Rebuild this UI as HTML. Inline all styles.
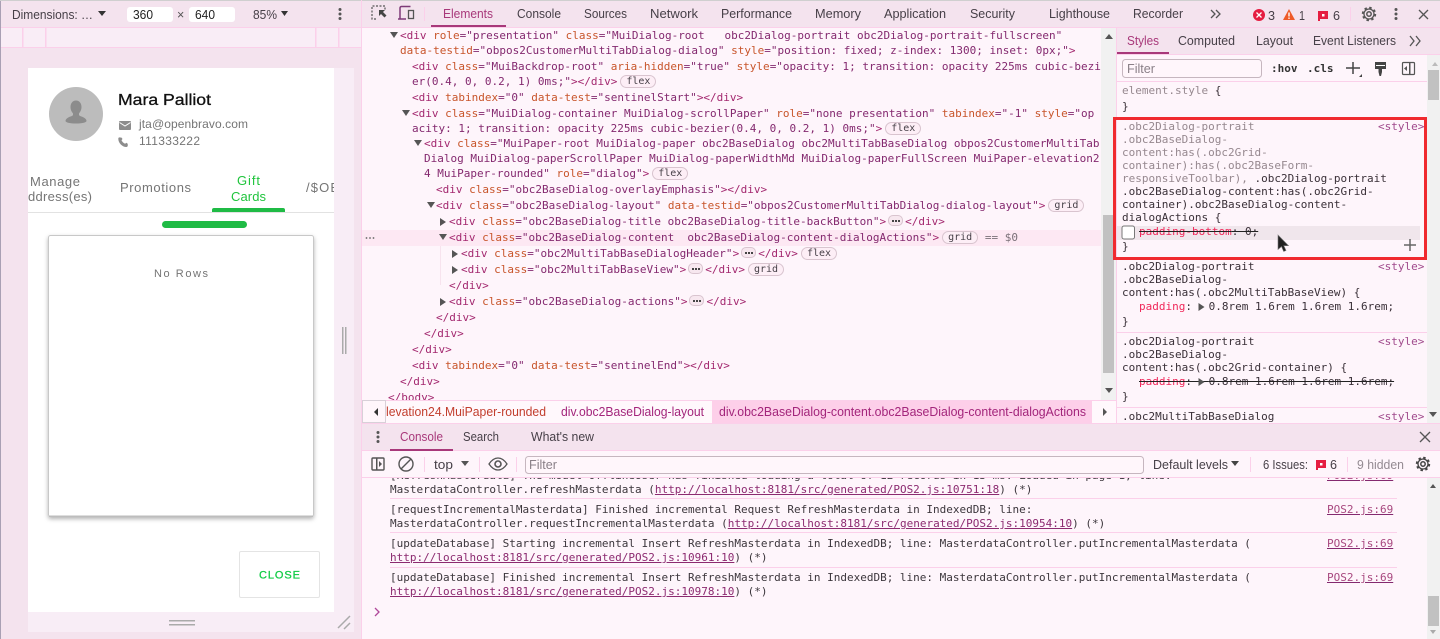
<!DOCTYPE html>
<html><head><meta charset="utf-8"><title>DevTools</title>
<style>
html,body{margin:0;padding:0;width:1440px;height:639px;overflow:hidden;background:#fef5fb}
svg{position:absolute;left:0;top:0}
.ov{z-index:3}
text{font-family:"Liberation Sans",sans-serif;font-size:12.5px;fill:#474048}
.r{font-family:"Liberation Sans",sans-serif;fill:#757575;font-size:13px}
.m{font-family:"DejaVu Sans Mono",monospace;font-size:11px}
.clip{position:absolute;overflow:hidden;z-index:2}
.l{position:absolute;font:11px/16px "DejaVu Sans Mono",monospace;white-space:pre;color:#a3286f}
.a{color:#c8552b}.v{color:#84296f}
.s{color:#333038}.g{color:#96888f}.p{color:#f0285a}.k{color:#3a3038}
.st{text-decoration:line-through;text-decoration-color:#222}
.c{color:#3c363c}.h{color:#8c2a70;text-decoration:underline}
.j{color:#a8487f;text-decoration:underline;text-decoration-color:#84296f}
.b{display:inline-block;height:11px;line-height:11px;border:1px solid #d9c4cf;background:#fdeef6;border-radius:7px;color:#474048;font-size:10px;padding:0 5px;vertical-align:1px;margin-left:3px}
.d{display:inline-block;width:13px;height:9px;border:1px solid #d9c4cf;background:#f7e7ef;border-radius:5px;vertical-align:-1px;position:relative;margin:0 2px}
.d:after{content:"";position:absolute;left:3px;top:4px;width:1.5px;height:1.5px;background:#444;box-shadow:3px 0 #444,6px 0 #444}
</style></head><body>

<svg width="1440" height="639" viewBox="0 0 1440 639">
<!-- base panels -->
<rect width="1440" height="639" fill="#fef5fb"/>
<rect width="362" height="639" fill="#f4e3ee"/>
<rect width="1" height="639" x="0" fill="#a9a0b4"/>
<rect y="0" width="1440" height="1" fill="#cfcfcf"/>
<rect x="1" y="28" width="360" height="19" fill="#f9edf6"/>
<rect x="1" y="27" width="360" height="1" fill="#fbd0ea"/>
<rect x="1" y="47" width="360" height="1" fill="#fbd0ea"/>
<rect x="22" y="28" width="1.5" height="19" fill="#fbd0ea"/><rect x="45" y="28" width="1.5" height="19" fill="#fbd0ea"/><rect x="315" y="28" width="1.5" height="19" fill="#fbd0ea"/><rect x="338" y="28" width="1.5" height="19" fill="#fbd0ea"/>
<rect x="334" y="68" width="20" height="564" fill="#f8edf6"/>
<rect x="28" y="612" width="326" height="20" fill="#f8edf6"/>
<rect x="28" y="68" width="306" height="544" fill="#fff"/>
<rect x="361" y="0" width="1" height="639" fill="#fbd0ea"/>
<!-- top tab bar -->
<rect x="362" y="1" width="1078" height="26" fill="#f4e3ee"/>
<rect x="362" y="27" width="1078" height="1" fill="#fbd0ea"/>
<rect x="424" y="7" width="1" height="14" fill="#fbd0ea"/>
<rect x="431" y="25" width="75" height="2" fill="#a8387a"/>
<!-- scrollbars -->
<rect x="1101" y="28" width="15" height="373" fill="#f1f1f1"/>
<rect x="1103" y="215" width="11" height="158" fill="#c1c1c1"/>
<rect x="1116" y="28" width="1" height="396" fill="#fbd0ea"/>
<rect x="1427" y="55" width="13" height="369" fill="#f1f1f1"/>
<rect x="1428" y="70" width="11" height="30" fill="#c1c1c1"/>
<!-- styles tabs -->
<rect x="1117" y="28" width="323" height="26" fill="#f4e3ee"/>
<rect x="1117" y="54" width="323" height="1" fill="#fbd0ea"/>
<rect x="1117" y="52" width="52" height="2" fill="#a8387a"/>
<rect x="1117" y="81" width="310" height="1" fill="#fbd0ea"/>
<rect x="1122.5" y="59.5" width="139" height="18" rx="3" fill="#fff6fb" stroke="#c6b6bf"/>
<rect x="1117" y="259" width="310" height="1" fill="#fbd0ea"/>
<rect x="1117" y="332" width="310" height="1" fill="#fbd0ea"/>
<rect x="1117" y="407" width="310" height="1" fill="#fbd0ea"/>
<rect x="1117" y="226" width="303" height="14" fill="#f0e6ec"/>
<!-- selected DOM row -->
<rect x="362" y="230" width="739" height="16" fill="#fde8f3"/>
<rect x="440" y="246" width="1" height="39" fill="#f7e3ee"/>
<!-- breadcrumbs -->
<rect x="362" y="400" width="754" height="1" fill="#fbd0ea"/>
<rect x="362" y="401" width="754" height="23" fill="#fff8fc"/>
<rect x="712" y="401" width="380" height="22" fill="#fdcfe9"/>
<rect x="362.5" y="400.5" width="23" height="22" fill="#fff6fb" stroke="#d8d0d8"/>
<rect x="362" y="423" width="1078" height="1" fill="#fbd0ea"/>
<!-- drawer -->
<rect x="362" y="424" width="1078" height="26" fill="#f4e3ee"/>
<rect x="362" y="450" width="1078" height="1" fill="#fbd0ea"/>
<rect x="390" y="449" width="63" height="2" fill="#a8387a"/>
<rect x="362" y="451" width="1078" height="26" fill="#fef5fb"/>
<rect x="362" y="477" width="1078" height="1" fill="#fbd0ea"/>
<rect x="424" y="457" width="1" height="15" fill="#fbd0ea"/><rect x="479" y="457" width="1" height="15" fill="#fbd0ea"/><rect x="516" y="457" width="1" height="15" fill="#fbd0ea"/><rect x="1250" y="457" width="1" height="15" fill="#fbd0ea"/><rect x="1347" y="457" width="1" height="15" fill="#fbd0ea"/>
<rect x="525.5" y="456.5" width="618" height="17" rx="3" fill="#fff6fb" stroke="#c6b6bf"/>
<rect x="1427" y="478" width="13" height="161" fill="#f1f1f1"/>
<rect x="1428" y="596" width="11" height="30" fill="#c1c1c1"/>
<rect x="390" y="498" width="1007" height="1" fill="#fbd0ea"/><rect x="390" y="532" width="1007" height="1" fill="#fbd0ea"/><rect x="390" y="567" width="1007" height="1" fill="#fbd0ea"/>
</svg>

<div class="clip" style="left:362px;top:29px;width:739px;height:371px">
<div class="l" style="left:38px;top:-1px">&lt;div <span class="a">role</span><span class="v">="presentation"</span> <span class="a">class</span><span class="v">="MuiDialog-root   obc2Dialog-portrait obc2Dialog-portrait-fullscreen"</span></div>
<div class="l" style="left:38px;top:14px"><span class="a">data-testid</span><span class="v">="obpos2CustomerMultiTabDialog-dialog"</span> <span class="a">style</span><span class="v">="position: fixed; z-index: 1300; inset: 0px;"</span>&gt;</div>
<div class="l" style="left:50px;top:30px">&lt;div <span class="a">class</span><span class="v">="MuiBackdrop-root"</span> <span class="a">aria-hidden</span><span class="v">="true"</span> <span class="a">style</span><span class="v">="opacity: 1; transition: opacity 225ms cubic-bezi</span></div>
<div class="l" style="left:50px;top:45px"><span class="v">er(0.4, 0, 0.2, 1) 0ms;"</span>&gt;&lt;/div&gt;<span class="b">flex</span></div>
<div class="l" style="left:50px;top:61px">&lt;div <span class="a">tabindex</span><span class="v">="0"</span> <span class="a">data-test</span><span class="v">="sentinelStart"</span>&gt;&lt;/div&gt;</div>
<div class="l" style="left:50px;top:77px">&lt;div <span class="a">class</span><span class="v">="MuiDialog-container MuiDialog-scrollPaper"</span> <span class="a">role</span><span class="v">="none presentation"</span> <span class="a">tabindex</span><span class="v">="-1"</span> <span class="a">style</span><span class="v">="op</span></div>
<div class="l" style="left:50px;top:92px"><span class="v">acity: 1; transition: opacity 225ms cubic-bezier(0.4, 0, 0.2, 1) 0ms;"</span>&gt;<span class="b">flex</span></div>
<div class="l" style="left:62px;top:107px">&lt;div <span class="a">class</span><span class="v">="MuiPaper-root MuiDialog-paper obc2BaseDialog obc2MultiTabBaseDialog obpos2CustomerMultiTab</span></div>
<div class="l" style="left:62px;top:122px"><span class="v">Dialog MuiDialog-paperScrollPaper MuiDialog-paperWidthMd MuiDialog-paperFullScreen MuiPaper-elevation2</span></div>
<div class="l" style="left:62px;top:137px"><span class="v">4 MuiPaper-rounded"</span> <span class="a">role</span><span class="v">="dialog"</span>&gt;<span class="b">flex</span></div>
<div class="l" style="left:74px;top:153px">&lt;div <span class="a">class</span><span class="v">="obc2BaseDialog-overlayEmphasis"</span>&gt;&lt;/div&gt;</div>
<div class="l" style="left:74px;top:169px">&lt;div <span class="a">class</span><span class="v">="obc2BaseDialog-layout"</span> <span class="a">data-testid</span><span class="v">="obpos2CustomerMultiTabDialog-dialog-layout"</span>&gt;<span class="b">grid</span></div>
<div class="l" style="left:87px;top:185px">&lt;div <span class="a">class</span><span class="v">="obc2BaseDialog-title obc2BaseDialog-title-backButton"</span>&gt;<span class="d"></span>&lt;/div&gt;</div>
<div class="l" style="left:87px;top:201px">&lt;div <span class="a">class</span><span class="v">="obc2BaseDialog-content  obc2BaseDialog-content-dialogActions"</span>&gt;<span class="b">grid</span> <span style="color:#7a7078">== $0</span></div>
<div class="l" style="left:99px;top:217px">&lt;div <span class="a">class</span><span class="v">="obc2MultiTabBaseDialogHeader"</span>&gt;<span class="d"></span>&lt;/div&gt;<span class="b">flex</span></div>
<div class="l" style="left:99px;top:233px">&lt;div <span class="a">class</span><span class="v">="obc2MultiTabBaseView"</span>&gt;<span class="d"></span>&lt;/div&gt;<span class="b">grid</span></div>
<div class="l" style="left:87px;top:249px">&lt;/div&gt;</div>
<div class="l" style="left:87px;top:265px">&lt;div <span class="a">class</span><span class="v">="obc2BaseDialog-actions"</span>&gt;<span class="d"></span>&lt;/div&gt;</div>
<div class="l" style="left:74px;top:281px">&lt;/div&gt;</div>
<div class="l" style="left:62px;top:297px">&lt;/div&gt;</div>
<div class="l" style="left:50px;top:313px">&lt;/div&gt;</div>
<div class="l" style="left:50px;top:329px">&lt;div <span class="a">tabindex</span><span class="v">="0"</span> <span class="a">data-test</span><span class="v">="sentinelEnd"</span>&gt;&lt;/div&gt;</div>
<div class="l" style="left:38px;top:345px">&lt;/div&gt;</div>
<div class="l" style="left:26px;top:361px">&lt;/body&gt;</div>
</div>

<div class="clip" style="left:1117px;top:82px;width:310px;height:342px">
<div class="l g" style="left:5px;top:1px">element.style <span class="k">{</span></div>
<div class="l k" style="left:5px;top:17px">}</div>
<div class="l g" style="left:5px;top:37px">.obc2Dialog-portrait</div>
<div class="l g" style="left:5px;top:50px">.obc2BaseDialog-</div>
<div class="l g" style="left:5px;top:63px">content:has(.obc2Grid-</div>
<div class="l g" style="left:5px;top:76px">container):has(.obc2BaseForm-</div>
<div class="l g" style="left:5px;top:89px">responsiveToolbar), <span class="k">.obc2Dialog-portrait</span></div>
<div class="l k" style="left:5px;top:102px">.obc2BaseDialog-content:has(.obc2Grid-</div>
<div class="l k" style="left:5px;top:115px">container).obc2BaseDialog-content-</div>
<div class="l k" style="left:5px;top:128px">dialogActions {</div>
<div class="l p st" style="left:22px;top:142px">padding-bottom<span class="k">: 0;</span></div>
<div class="l k" style="left:5px;top:157px">}</div>
<div class="l k" style="left:5px;top:177px">.obc2Dialog-portrait</div>
<div class="l k" style="left:5px;top:190px">.obc2BaseDialog-</div>
<div class="l k" style="left:5px;top:203px">content:has(.obc2MultiTabBaseView) {</div>
<div class="l p" style="left:22px;top:217px">padding<span class="k">: <span style="letter-spacing:3.4px"> </span>0.8rem 1.6rem 1.6rem 1.6rem;</span></div>
<div class="l k" style="left:5px;top:232px">}</div>
<div class="l k" style="left:5px;top:252px">.obc2Dialog-portrait</div>
<div class="l k" style="left:5px;top:265px">.obc2BaseDialog-</div>
<div class="l k" style="left:5px;top:278px">content:has(.obc2Grid-container) {</div>
<div class="l p st" style="left:22px;top:292px">padding<span class="k">: <span style="letter-spacing:3.4px"> </span>0.8rem 1.6rem 1.6rem 1.6rem;</span></div>
<div class="l k" style="left:5px;top:307px">}</div>
<div class="l k" style="left:5px;top:327px">.obc2MultiTabBaseDialog</div>
<div class="l" style="left:261px;top:37px;color:#a04a8c">&lt;style&gt;</div>
<div class="l" style="left:261px;top:177px;color:#a04a8c">&lt;style&gt;</div>
<div class="l" style="left:261px;top:252px;color:#a04a8c">&lt;style&gt;</div>
<div class="l" style="left:261px;top:327px;color:#a04a8c">&lt;style&gt;</div>
</div>

<div class="clip" style="left:362px;top:478px;width:1065px;height:161px">
<div class="l c" style="left:28px;top:-10px">[RefreshMasterdata] The model OfflineUser has finished loading a total of 12 records in 13 ms. Loaded in page 1, line:</div>
<div class="l c" style="left:28px;top:4px">MasterdataController.refreshMasterdata (<span class="h">http://localhost:8181/src/generated/POS2.js:10751:18</span>) (*)</div>
<div class="l c" style="left:28px;top:24px">[requestIncrementalMasterdata] Finished incremental Request RefreshMasterdata in IndexedDB; line:</div>
<div class="l c" style="left:28px;top:38px">MasterdataController.requestIncrementalMasterdata (<span class="h">http://localhost:8181/src/generated/POS2.js:10954:10</span>) (*)</div>
<div class="l c" style="left:28px;top:58px">[updateDatabase] Starting incremental Insert RefreshMasterdata in IndexedDB; line: MasterdataController.putIncrementalMasterdata (</div>
<div class="l c" style="left:28px;top:72px"><span class="h">http://localhost:8181/src/generated/POS2.js:10961:10</span>) (*)</div>
<div class="l c" style="left:28px;top:92px">[updateDatabase] Finished incremental Insert RefreshMasterdata in IndexedDB; line: MasterdataController.putIncrementalMasterdata (</div>
<div class="l c" style="left:28px;top:106px"><span class="h">http://localhost:8181/src/generated/POS2.js:10978:10</span>) (*)</div>
<div class="l j" style="left:965px;top:-10px">POS2.js:69</div>
<div class="l j" style="left:965px;top:24px">POS2.js:69</div>
<div class="l j" style="left:965px;top:58px">POS2.js:69</div>
<div class="l j" style="left:965px;top:92px">POS2.js:69</div>
</div>

<svg class="ov" width="1440" height="639" viewBox="0 0 1440 639">
<defs><filter id="sh" x="-5%" y="-5%" width="110%" height="110%"><feDropShadow dx="0" dy="2" stdDeviation="2" flood-color="#000" flood-opacity=".3"/></filter></defs>
<!-- device toolbar -->
<text x="12" y="19" textLength="81" lengthAdjust="spacingAndGlyphs">Dimensions: …</text>
<path d="M98 11h8l-4 5z" fill="#333"/>
<rect x="127" y="7" width="46" height="15" rx="3" fill="#fff"/><rect x="189" y="7" width="46" height="15" rx="3" fill="#fff"/>
<text x="133" y="19" textLength="20" lengthAdjust="spacingAndGlyphs" style="fill:#222">360</text>
<text x="177" y="19" style="fill:#555">×</text>
<text x="195" y="19" textLength="20" lengthAdjust="spacingAndGlyphs" style="fill:#222">640</text>
<text x="253" y="19" textLength="24" lengthAdjust="spacingAndGlyphs">85%</text>
<path d="M281 11h7l-3.500 5z" fill="#333"/>
<g fill="#555"><circle cx="340" cy="9.500" r="1.500"/><circle cx="340" cy="14" r="1.500"/><circle cx="340" cy="18.500" r="1.500"/></g>
<!-- device content -->
<circle cx="76" cy="114" r="27" fill="#bcbcbc"/>
<path d="M76 100.500c3.500 0 5.500 3 5.500 6.500 0 3-1.400 5-2.500 6.500v1.500c0 1 3.500 1.500 5.500 3 1.500 1 2 2 2 3 0 1.500-5 2.500-10.500 2.500s-10.500-1-10.500-2.500c0-1 .5-2 2-3 2-1.500 5.500-2 5.500-3v-1.500c-1.100-1.500-2.500-3.500-2.500-6.500 0-3.500 2-6.500 5.500-6.500z" fill="#8c8c8c"/>
<text x="118" y="105" textLength="93" lengthAdjust="spacingAndGlyphs" style="font-size:16px;fill:#111;stroke:#111;stroke-width:.3px">Mara Palliot</text>
<rect x="119" y="121" width="12" height="9" rx="1" fill="#8d8d8d"/><path d="M119.500 122.500l5.500 3.500 5.500-3.500" fill="none" stroke="#fff" stroke-width="1"/>
<path d="M120 137.500c2 0 1.500.2 2.500 1.500l-1 1.200c.8 1.600 2 2.800 3.600 3.600l1.200-1c1.300 1 1.500.5 1.500 2.500 0 1-.5 1.700-1.500 1.700-4 0-8-4-8-8.300 0-1 .7-1.700 1.700-1.200z" fill="#8d8d8d"/>
<text class="r" x="139" y="128" textLength="109" lengthAdjust="spacing" style="font-size:12px">jta@openbravo.com</text>
<text class="r" x="139" y="145" textLength="61" lengthAdjust="spacing" style="font-size:12px">111333222</text>
<text class="r" x="30" y="186" textLength="50" lengthAdjust="spacing">Manage</text>
<text class="r" x="28" y="201" textLength="64" lengthAdjust="spacing">ddress(es)</text>
<text class="r" x="120" y="192" textLength="71" lengthAdjust="spacing">Promotions</text>
<text class="r" x="237" y="185" textLength="23" lengthAdjust="spacing" style="fill:#1fc43c">Gift</text>
<text class="r" x="231" y="201" textLength="35" lengthAdjust="spacing" style="fill:#1fc43c">Cards</text>
<svg x="306" y="178" width="28" height="20"><text class="r" x="0" y="14" textLength="33" lengthAdjust="spacing">/$OB</text></svg>
<rect x="28" y="212" width="306" height="1" fill="#e2e2e2"/>
<path d="M212 212v-2a2 2 0 0 1 2-2h69a2 2 0 0 1 2 2v2z" fill="#1fbb45"/>
<rect x="162" y="221" width="85" height="7" rx="3.500" fill="#1fbb45"/>
<rect x="48.500" y="235.500" width="265" height="281" rx="2" fill="#fff" stroke="#c8c8c8" stroke-width="1" filter="url(#sh)"/>
<rect x="49" y="515.500" width="264" height="1.500" fill="#bdbdbd"/>
<text class="r" x="154" y="277" textLength="54" lengthAdjust="spacing" style="font-size:11px">No Rows</text>
<rect x="239.500" y="551.500" width="80" height="46" rx="1.500" fill="#fff" stroke="#e4e4e4"/>
<text x="259" y="578.500" textLength="41" lengthAdjust="spacing" style="font-size:11px;fill:#14cc48;stroke:#14cc48;stroke-width:.3px">CLOSE</text>
<rect x="342" y="327" width="1.500" height="27" fill="#aaa"/><rect x="345" y="327" width="1.500" height="27" fill="#aaa"/>
<rect x="169" y="620" width="26" height="1.500" fill="#aaa"/><rect x="169" y="624" width="26" height="1.500" fill="#aaa"/>
<path d="M338 628l12-12M344 629l6-6" stroke="#aaa" stroke-width="1.500"/>
<!-- devtools top icons -->
<path d="M376 19h-4v-13h13v4" fill="none" stroke="#555" stroke-width="1.200" stroke-dasharray="2 1.500"/>
<path d="M379 10h6l-2 2 3.500 3.500-2 2-3.500-3.500-2 2z" fill="#444"/>
<path d="M400 19v-11a1.500 1.500 0 0 1 1.500-1.500h9" fill="none" stroke="#7e3a78" stroke-width="1.500"/><path d="M398 19h8" stroke="#7e3a78" stroke-width="1.500"/><rect x="408.500" y="10.500" width="5" height="8" fill="none" stroke="#555" stroke-width="1.300"/>
<text x="443" y="18" textLength="50" lengthAdjust="spacingAndGlyphs" style="fill:#a8387a">Elements</text>
<text x="517" y="18" textLength="44" lengthAdjust="spacingAndGlyphs">Console</text>
<text x="584" y="18" textLength="43" lengthAdjust="spacingAndGlyphs">Sources</text>
<text x="650" y="18" textLength="48" lengthAdjust="spacingAndGlyphs">Network</text>
<text x="721" y="18" textLength="71" lengthAdjust="spacingAndGlyphs">Performance</text>
<text x="815" y="18" textLength="46" lengthAdjust="spacingAndGlyphs">Memory</text>
<text x="884" y="18" textLength="62" lengthAdjust="spacingAndGlyphs">Application</text>
<text x="970" y="18" textLength="45" lengthAdjust="spacingAndGlyphs">Security</text>
<text x="1049" y="18" textLength="61" lengthAdjust="spacingAndGlyphs">Lighthouse</text>
<text x="1133" y="18" textLength="50" lengthAdjust="spacingAndGlyphs">Recorder</text>
<path d="M1211 10l4 4-4 4M1216 10l4 4-4 4" fill="none" stroke="#555" stroke-width="1.300"/>
<circle cx="1259" cy="15" r="6" fill="#e51d41"/><path d="M1256.500 12.500l5 5M1261.500 12.500l-5 5" stroke="#fff" stroke-width="1.300"/>
<text x="1268" y="20" textLength="7" lengthAdjust="spacingAndGlyphs">3</text>
<path d="M1283 20l6-11 6 11z" fill="#ee5a28"/><rect x="1288.300" y="12.500" width="1.400" height="4" fill="#fff"/><rect x="1288.300" y="17.500" width="1.400" height="1.400" fill="#fff"/>
<text x="1299" y="20" textLength="6" lengthAdjust="spacingAndGlyphs">1</text>
<path d="M1318 11h10v8h-8v2h-2z" fill="#e51d41"/><rect x="1322" y="14" width="2.500" height="2.500" fill="#fff"/>
<text x="1333" y="20" textLength="7" lengthAdjust="spacingAndGlyphs">6</text>
<rect x="1350" y="7" width="1" height="14" fill="#fbd0ea"/>
<g fill="none" stroke="#555"><circle cx="1369" cy="14" r="6.300" stroke-width="1.800" stroke-dasharray="2.500 2.450"/><circle cx="1369" cy="14" r="5" stroke-width="1.300"/><circle cx="1369" cy="14" r="2.200" stroke-width="1.500"/></g>
<g fill="#555"><circle cx="1396" cy="9.500" r="1.500"/><circle cx="1396" cy="14" r="1.500"/><circle cx="1396" cy="18.500" r="1.500"/></g>
<path d="M1419 10l9 9M1428 10l-9 9" stroke="#555" stroke-width="1.300"/>
<!-- DOM triangles -->
<g fill="#555">
<path d="M390 32h8l-4 6z"/><path d="M402 110h8l-4 6z"/><path d="M414 140h8l-4 6z"/><path d="M427 202h8l-4 6z"/>
<path d="M440 218l6 4-6 4z"/><path d="M439 234h8l-4 6z"/><path d="M452 250l6 4-6 4z"/><path d="M452 266l6 4-6 4z"/><path d="M440 298l6 4-6 4z"/>
</g>
<g fill="#666"><circle cx="366.500" cy="238" r=".9"/><circle cx="370" cy="238" r=".9"/><circle cx="373.500" cy="238" r=".9"/></g>
<path d="M1105 39l4-5 4 5z" fill="#555"/><path d="M1105 388l4 5 4-5z" fill="#555"/>
<path d="M1103 408l4 4-4 4z" fill="#555"/>
<path d="M378 408l-4 4 4 4z" fill="#333"/>
<!-- styles tabs -->
<text x="1127" y="45" textLength="32" lengthAdjust="spacingAndGlyphs" style="fill:#a8387a">Styles</text>
<text x="1178" y="45" textLength="57" lengthAdjust="spacingAndGlyphs">Computed</text>
<text x="1256" y="45" textLength="37" lengthAdjust="spacingAndGlyphs">Layout</text>
<text x="1313" y="45" textLength="83" lengthAdjust="spacingAndGlyphs">Event Listeners</text>
<path d="M1410 36l4 5-4 5M1416 36l4 5-4 5" fill="none" stroke="#555" stroke-width="1.300"/>
<text x="1127" y="73" textLength="28" lengthAdjust="spacingAndGlyphs" style="fill:#8a8088">Filter</text>
<text class="m" x="1271" y="72" style="font-weight:bold;fill:#333">:hov</text>
<text class="m" x="1307" y="72" style="font-weight:bold;fill:#333">.cls</text>
<path d="M1353 62v12M1346 68h14" stroke="#444" stroke-width="1.500"/><path d="M1359 77l3-3v3z" fill="#444"/>
<path d="M1375 62h11v7h-4v3l-1 4h-1.500l-1-4v-3h-3.500z" fill="#444"/><rect x="1376" y="65" width="9" height="1" fill="#fff"/>
<rect x="1402.500" y="62.500" width="12" height="12" rx="1" fill="none" stroke="#555" stroke-width="1.200"/><rect x="1409" y="63" width="1.500" height="11" fill="#555"/><path d="M1407 66v5l-3-2.500z" fill="#555"/>
<path d="M1432 66l3-4 3 4z" fill="#bbb"/>
<!-- red highlight -->
<rect x="1114.500" y="118.500" width="311" height="140" fill="none" stroke="#f02a2f" stroke-width="3"/>
<rect x="1122" y="226" width="12.500" height="13" rx="2" fill="#fff" stroke="#777"/>
<path d="M1404 245h12M1410 239v12" stroke="#666" stroke-width="1.500"/>
<path d="M1198.500 303l6 4-6 4z" fill="#555"/><path d="M1198.500 378l6 4-6 4z" fill="#555"/>
<path d="M1278 235v14.500l3.500-3 2.200 5 2.300-1-2.200-4.800h4.700z" fill="#222" stroke="#777" stroke-width=".6"/>
<path d="M1429 412h8l-4 5z" fill="#555"/>
<!-- breadcrumb -->
<svg x="386" y="401" width="326" height="22">
<text x="0" y="15" textLength="160" lengthAdjust="spacingAndGlyphs" style="fill:#c23e2e">levation24.MuiPaper-rounded</text>
<text x="175" y="15" textLength="143" lengthAdjust="spacingAndGlyphs" style="fill:#a3257b">div.obc2BaseDialog-layout</text>
</svg>
<text x="719" y="416" textLength="367" lengthAdjust="spacingAndGlyphs" style="fill:#a3257b">div.obc2BaseDialog-content.obc2BaseDialog-content-dialogActions</text>
<!-- drawer -->
<g fill="#555"><circle cx="378" cy="432.500" r="1.500"/><circle cx="378" cy="437" r="1.500"/><circle cx="378" cy="441.500" r="1.500"/></g>
<text x="400" y="441" textLength="43" lengthAdjust="spacingAndGlyphs" style="fill:#a8387a">Console</text>
<text x="463" y="441" textLength="36" lengthAdjust="spacingAndGlyphs">Search</text>
<text x="531" y="441" textLength="63" lengthAdjust="spacingAndGlyphs">What's new</text>
<path d="M1420 432l10 10M1430 432l-10 10" stroke="#555" stroke-width="1.300"/>
<rect x="372" y="458" width="12" height="12" rx="1" fill="none" stroke="#555" stroke-width="1.400"/><rect x="376" y="458" width="1.500" height="12" fill="#555"/><path d="M379 461l3 3-3 3z" fill="#555"/>
<circle cx="406" cy="464" r="7" fill="none" stroke="#555" stroke-width="1.400"/><path d="M401 469l10-10" stroke="#555" stroke-width="1.400"/>
<text x="434" y="469" textLength="19" lengthAdjust="spacingAndGlyphs">top</text>
<path d="M461 461h8l-4 5z" fill="#555"/>
<path d="M489 464c3-4.500 6-6 9-6s6 1.500 9 6c-3 4.500-6 6-9 6s-6-1.500-9-6z" fill="none" stroke="#555" stroke-width="1.300"/><circle cx="498" cy="464" r="3" fill="none" stroke="#555" stroke-width="1.600"/>
<text x="529" y="469" textLength="28" lengthAdjust="spacingAndGlyphs" style="fill:#8a8088">Filter</text>
<text x="1153" y="469" textLength="75" lengthAdjust="spacingAndGlyphs">Default levels</text>
<path d="M1231 461h8l-4 5z" fill="#444"/>
<text x="1263" y="469" textLength="45" lengthAdjust="spacingAndGlyphs">6 Issues:</text>
<path d="M1316 460h10v8h-8v2h-2z" fill="#e51d41"/><rect x="1320" y="463" width="2.500" height="2.500" fill="#fff"/>
<text x="1330" y="469" textLength="7" lengthAdjust="spacingAndGlyphs">6</text>
<text x="1357" y="469" textLength="47" lengthAdjust="spacingAndGlyphs" style="fill:#948a92">9 hidden</text>
<g fill="none" stroke="#444"><circle cx="1423" cy="464" r="6.300" stroke-width="1.800" stroke-dasharray="2.500 2.450"/><circle cx="1423" cy="464" r="5" stroke-width="1.300"/><circle cx="1423" cy="464" r="2.200" stroke-width="1.500"/></g>
<path d="M1430 488l3-4 3 4z" fill="#555"/><path d="M1430 630l3 4 3-4z" fill="#aaa"/>
<path d="M375 608l4 4-4 4" fill="none" stroke="#b0489a" stroke-width="1.300"/>
</svg>
</body></html>
